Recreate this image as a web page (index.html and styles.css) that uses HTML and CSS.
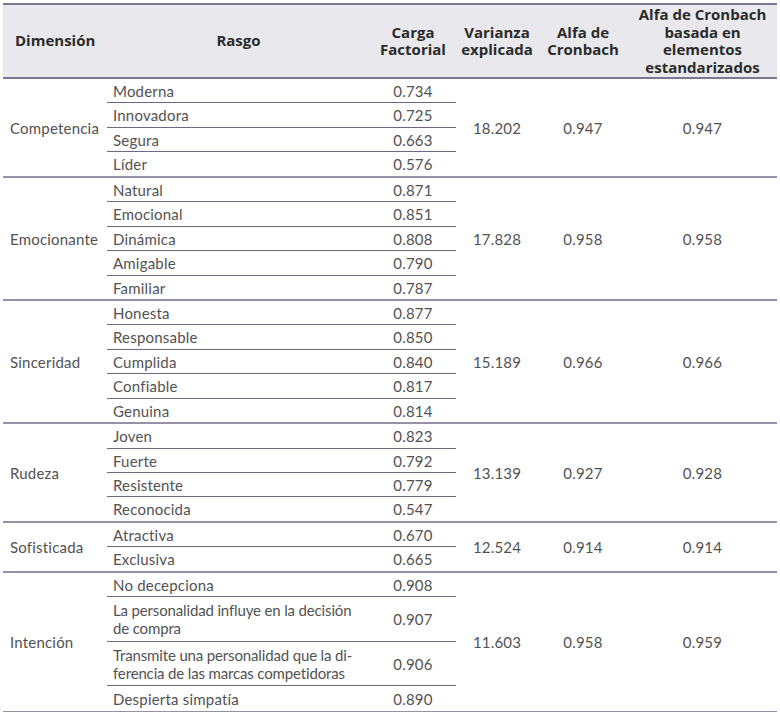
FILE: index.html
```html
<!DOCTYPE html>
<html lang="es">
<head>
<meta charset="utf-8">
<title>Tabla</title>
<link rel="stylesheet" href="styles.css">
</head>
<body>
<table class="t">
  <colgroup>
    <col class="c1"><col class="c2"><col class="c3"><col class="c4"><col class="c5"><col class="c6">
  </colgroup>
  <thead>
    <tr>
      <th class="hl">Dimensión</th>
      <th>Rasgo</th>
      <th>Carga<br>Factorial</th>
      <th>Varianza<br>explicada</th>
      <th>Alfa de<br>Cronbach</th>
      <th>Alfa de Cronbach<br>basada en<br>elementos<br>estandarizados</th>
    </tr>
  </thead>
  <tbody>
    <tr class="g">
      <td class="d" rowspan="4">Competencia</td>
      <td class="r s">Moderna</td><td class="n s">0.734</td>
      <td class="n" rowspan="4">18.202</td><td class="n" rowspan="4">0.947</td><td class="n" rowspan="4">0.947</td>
    </tr>
    <tr><td class="r s">Innovadora</td><td class="n s">0.725</td></tr>
    <tr><td class="r s">Segura</td><td class="n s">0.663</td></tr>
    <tr><td class="r">Líder</td><td class="n">0.576</td></tr>

    <tr class="g">
      <td class="d" rowspan="5">Emocionante</td>
      <td class="r s">Natural</td><td class="n s">0.871</td>
      <td class="n" rowspan="5">17.828</td><td class="n" rowspan="5">0.958</td><td class="n" rowspan="5">0.958</td>
    </tr>
    <tr><td class="r s">Emocional</td><td class="n s">0.851</td></tr>
    <tr><td class="r s">Dinámica</td><td class="n s">0.808</td></tr>
    <tr><td class="r s">Amigable</td><td class="n s">0.790</td></tr>
    <tr><td class="r">Familiar</td><td class="n">0.787</td></tr>

    <tr class="g">
      <td class="d" rowspan="5">Sinceridad</td>
      <td class="r s">Honesta</td><td class="n s">0.877</td>
      <td class="n" rowspan="5">15.189</td><td class="n" rowspan="5">0.966</td><td class="n" rowspan="5">0.966</td>
    </tr>
    <tr><td class="r s">Responsable</td><td class="n s">0.850</td></tr>
    <tr><td class="r s">Cumplida</td><td class="n s">0.840</td></tr>
    <tr><td class="r s">Confiable</td><td class="n s">0.817</td></tr>
    <tr><td class="r">Genuina</td><td class="n">0.814</td></tr>

    <tr class="g">
      <td class="d" rowspan="4">Rudeza</td>
      <td class="r s">Joven</td><td class="n s">0.823</td>
      <td class="n" rowspan="4">13.139</td><td class="n" rowspan="4">0.927</td><td class="n" rowspan="4">0.928</td>
    </tr>
    <tr><td class="r s">Fuerte</td><td class="n s">0.792</td></tr>
    <tr><td class="r s">Resistente</td><td class="n s">0.779</td></tr>
    <tr><td class="r">Reconocida</td><td class="n">0.547</td></tr>

    <tr class="g">
      <td class="d" rowspan="2">Sofisticada</td>
      <td class="r s">Atractiva</td><td class="n s">0.670</td>
      <td class="n" rowspan="2">12.524</td><td class="n" rowspan="2">0.914</td><td class="n" rowspan="2">0.914</td>
    </tr>
    <tr><td class="r">Exclusiva</td><td class="n">0.665</td></tr>

    <tr class="g">
      <td class="d" rowspan="4">Intención</td>
      <td class="r s">No decepciona</td><td class="n s">0.908</td>
      <td class="n" rowspan="4">11.603</td><td class="n" rowspan="4">0.958</td><td class="n" rowspan="4">0.959</td>
    </tr>
    <tr><td class="r s w">La personalidad influye en la decisión<br>de compra</td><td class="n s">0.907</td></tr>
    <tr><td class="r s w">Transmite una personalidad que la di-<br>ferencia de las marcas competidoras</td><td class="n s">0.906</td></tr>
    <tr class="end"><td class="r">Despierta simpatía</td><td class="n">0.890</td></tr>
  </tbody>
</table>
</body>
</html>
```
FILE: styles.css
```css
html, body {
  margin: 0;
  padding: 0;
  background: #ffffff;
}
body {
  padding: 3px 0 0 3px;
}
.t {
  border-collapse: collapse;
  table-layout: fixed;
  width: 774px;
  font-family: Lato, "Open Sans", sans-serif;
  font-size: 15px;
  letter-spacing: 0.2px;
  color: #525252;
}
.c1 { width: 104px; }
.c2 { width: 263px; }
.c3 { width: 86px; }
.c4 { width: 82px; }
.c5 { width: 90px; }
.c6 { width: 149px; }

.t thead th {
  background: #e9e9ed;
  border-top: 2px solid #7c7893;
  border-bottom: 2px solid #7c7893;
  font-family: "Open Sans", sans-serif;
  font-weight: 700;
  font-size: 15px;
  letter-spacing: 0;
  line-height: 17.5px;
  color: #2b2b2b;
  text-align: center;
  vertical-align: middle;
  padding: 1px 2px;
  height: 70px;
}
.t thead th.hl {
  text-align: left;
  padding-left: 12px;
}
.t td {
  padding: 3px 6px 2.45px;
  line-height: 18px;
  vertical-align: middle;
}
.t td.d {
  padding-left: 7px;
}
.t td.n {
  text-align: center;
}
.t td.w {
  white-space: nowrap;
  letter-spacing: -0.15px;
  padding-top: 4px;
  padding-bottom: 3.5px;
}
.t tr.end td {
  padding-top: 3.5px;
  padding-bottom: 3.5px;
}
.t td.s {
  border-bottom: 1px solid #6d6889;
}
.t tr.g td {
  border-top: 2px solid #9592a8;
}
.t tbody tr:last-child td,
.t td[rowspan] {
  border-bottom: 2px solid #9592a8;
}
```
